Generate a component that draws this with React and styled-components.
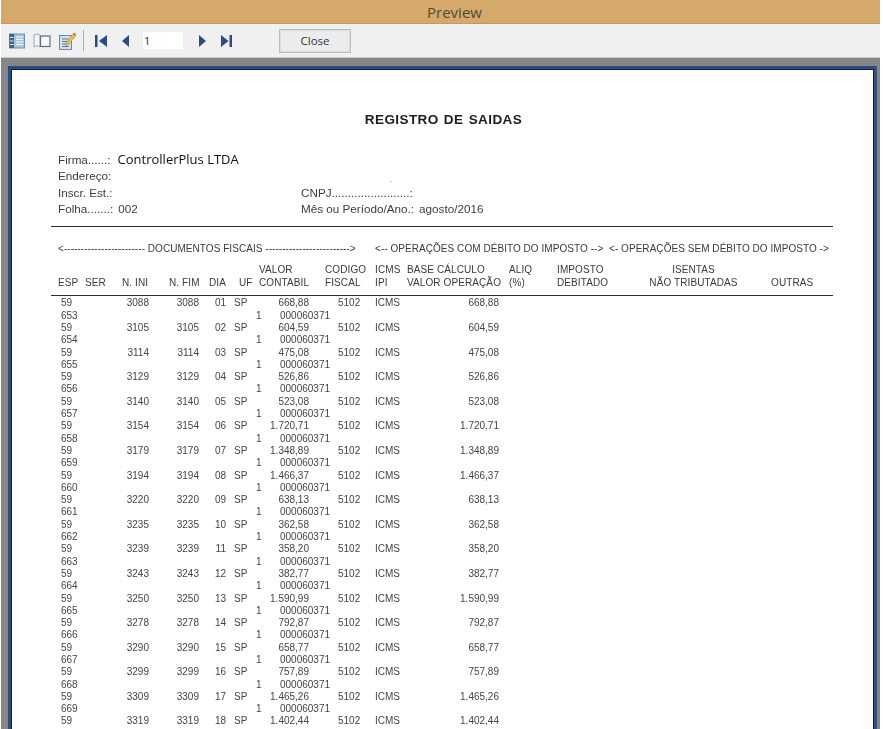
import React from "react";
import styled, { createGlobalStyle } from "styled-components";

const GlobalStyle = createGlobalStyle`
  html, body {
    margin: 0;
    padding: 0;
    background: #fff;
  }
  #root {
    height: 729px;
    overflow: hidden;
  }
`;

const Window = styled.div`
  width: 879px;
  height: 729px;
  margin-left: 1px;
  display: flex;
  flex-direction: column;
  overflow: hidden;
  font-family: "Liberation Sans", Arial, sans-serif;
`;
const TitleBar = styled.div`
  height: 23px;
  flex: none;
  background: #d4a96a;
  border-bottom: 1px solid #c09a60;
  display: flex;
  align-items: center;
  justify-content: center;
  padding-left: 28px;
  font-family: "Open Sans", sans-serif;
  font-size: 15px;
  color: #4f4a3a;
`;
const Toolbar = styled.div`
  height: 33px;
  flex: none;
  background: #f0f0f0;
  border-bottom: 1px solid #c9c9c9;
  display: flex;
  align-items: center;
  padding-left: 8px;
`;
const ToolIcon = styled.svg`
  flex: none;
  display: block;
  margin-left: ${(p) => p.$gap || 0}px;
`;
const Separator = styled.div`
  width: 1px;
  height: 21px;
  margin-left: 7px;
  background: #a9a9a9;
`;
const PageInput = styled.div`
  width: 39px;
  height: 17px;
  margin-left: 14px;
  padding-left: 1px;
  background: #fff;
  font-family: "Open Sans", sans-serif;
  font-size: 11px;
  line-height: 17px;
  color: #2b2b3c;
`;
const CloseButton = styled.button`
  width: 72px;
  height: 24px;
  margin-left: 47px;
  padding: 0;
  background: #ececec;
  border: 1px solid #bdbdbd;
  box-shadow: inset 0 0 0 1px #dcdcdc;
  font-family: "Open Sans", sans-serif;
  font-size: 11.5px;
  color: #333;
`;
const Desk = styled.div`
  flex: 1;
  min-height: 0;
  background: #878787;
  padding: 8px 3px 0 7px;
`;
const Sheet = styled.div`
  height: 100%;
  box-sizing: border-box;
  background: #fff;
  border: 3px solid #2b4a7e;
  border-right-color: #33507f;
  border-bottom: 0;
  box-shadow: inset 1px 1px 0 #10203c, inset -1px 0 0 #10203c;
  padding: 42px 41px 0 40px;
  color: #3a3a3a;
  font-size: 10px;
  overflow: hidden;
`;
const ReportBody = styled.div`
  filter: blur(0.3px);
`;
const ReportTitle = styled.h1`
  margin: 0;
  height: 18px;
  padding-left: 3px;
  font-size: 13.5px;
  line-height: 18px;
  font-weight: bold;
  letter-spacing: 0.42px;
  word-spacing: 1px;
  text-align: center;
  color: #1c1c1c;
`;
const InfoBlock = styled.div`
  margin-top: 22px;
  padding-left: 7px;
  display: grid;
  grid-template-columns: 243px 1fr;
  grid-auto-rows: 16.5px;
  align-items: center;
  font-size: 11.7px;
  color: #3d3d3d;
`;
const Company = styled.span`
  font-family: "Open Sans", sans-serif;
  font-size: 13px;
  color: #111;
  margin-left: 7px;
`;
const Gap = styled.span`
  margin-left: ${(p) => p.$w}px;
`;
const Speck = styled.span`
  align-self: end;
  margin-left: 89px;
  font-size: 8px;
  color: #888;
`;
const Rule = styled.hr`
  margin: ${(p) => p.$top}px 0 0;
  border: 0;
  height: 1px;
  background: #2c2c2c;
`;
const BandRow = styled.div`
  margin-top: 15px;
  height: 14px;
  line-height: 14px;
  padding-left: 7px;
  display: flex;
  font-size: 10px;
  letter-spacing: 0.05px;
  white-space: nowrap;
`;
const Band = styled.span`
  width: ${(p) => p.$w}px;
  flex: none;
`;
const HeadRow = styled.div`
  margin-top: 7px;
  padding-left: 7px;
  display: grid;
  grid-template-columns: 64px 47px 40px 30px 20px 66px 50px 32px 102px 48px 92px 122px 62px;
  grid-auto-rows: 13px;
  align-items: end;
  font-size: 10px;
  line-height: 13px;
  letter-spacing: 0.1px;
  white-space: nowrap;
`;
const HeadCell = styled.div`
  grid-row: ${(p) => p.$row || 2};
  grid-column: ${(p) => p.$col};
  justify-self: start;
`;
const EspSerCell = styled(HeadCell)`
  word-spacing: 4px;
`;
const IsentasCell = styled(HeadCell)`
  width: 89px;
  text-align: center;
`;
const Rows = styled.div`
  margin-top: 1px;
  padding-left: 10px;
  font-size: 10px;
  white-space: nowrap;
  color: #444;
`;
const MainLine = styled.div`
  display: grid;
  grid-template-columns: 49px 39px 50px 27px 36px 47px 66px 32px 92px;
  height: 12.3px;
  line-height: 12.3px;
`;
const SubLine = styled.div`
  display: grid;
  grid-template-columns: 195px 24px auto;
  height: 12.3px;
  line-height: 11.3px;
`;
const Cell = styled.span`
  text-align: ${(p) => (p.$right ? "right" : "left")};
  padding-left: ${(p) => p.$pad || 0}px;
`;

const listIcon = (
  <ToolIcon width="16" height="16" viewBox="0 0 16 16">
    <rect x="0.5" y="1" width="15" height="14" fill="#a8c4de" stroke="#6d8fae" />
    <rect x="0.5" y="1" width="4.5" height="14" fill="#3f648c" />
    <path d="M7 4h7M7 6.5h7M7 9h7M7 11.5h7" stroke="#f4f8fc" strokeWidth="1" />
    <path d="M1 4.5h3.5M1 8h3.5M1 11.5h3.5" stroke="#dbe6f0" strokeWidth="1" />
  </ToolIcon>
);

const bookIcon = (
  <ToolIcon $gap={8} width="18" height="16" viewBox="0 0 18 16">
    <path d="M1 2 C3 1 5 1 7 2 L7 14 C5 12.5 3 12.5 1 14 Z" fill="#f4f6f8" stroke="#98a8b8" />
    <rect x="7.5" y="3" width="9.5" height="10.5" fill="#f8f8f8" stroke="#5a6f88" strokeWidth="1.2" />
  </ToolIcon>
);

const noteIcon = (
  <ToolIcon $gap={8} width="17" height="18" viewBox="0 0 17 18">
    <rect x="0.5" y="3.5" width="12" height="14" fill="#cfe0ee" stroke="#6a8aa8" />
    <path d="M3 7h7M3 9.5h6M3 12h7M3 14.5h7" stroke="#5f7f9e" strokeWidth="1" />
    <path d="M7 11 L14 2 L16.5 4 L9.5 12.5 L6.5 13.5 Z" fill="#e8c34c" stroke="#a88a30" strokeWidth="0.6" />
    <path d="M14 2 L15.2 0.6 L17 2.4 L16.5 4 Z" fill="#d8584c" />
  </ToolIcon>
);

const navColor = "#2b4b88";

const NavIcon = ({ gap, width, children }) => (
  <ToolIcon $gap={gap} width={width} height="12" viewBox={`0 0 ${width} 12`} fill={navColor}>
    {children}
  </ToolIcon>
);

// the last row's second line falls below the window, so it has no serie
const rows = [
  ["653", "3088", "01", "668,88"],
  ["654", "3105", "02", "604,59"],
  ["655", "3114", "03", "475,08"],
  ["656", "3129", "04", "526,86"],
  ["657", "3140", "05", "523,08"],
  ["658", "3154", "06", "1.720,71"],
  ["659", "3179", "07", "1.348,89"],
  ["660", "3194", "08", "1.466,37"],
  ["661", "3220", "09", "638,13"],
  ["662", "3235", "10", "362,58"],
  ["663", "3239", "11", "358,20"],
  ["664", "3243", "12", "382,77"],
  ["665", "3250", "13", "1.590,99"],
  ["666", "3278", "14", "792,87"],
  ["667", "3290", "15", "658,77"],
  ["668", "3299", "16", "757,89"],
  ["669", "3309", "17", "1.465,26"],
  [null, "3319", "18", "1.402,44"],
];

export default function App() {
  return (
    <Window>
      <GlobalStyle />
      <TitleBar>Preview</TitleBar>
      <Toolbar>
        {listIcon}
        {bookIcon}
        {noteIcon}
        <Separator />
        <NavIcon gap={11} width={12}>
          <rect x="0" y="0" width="2.5" height="12" />
          <path d="M12 0 V12 L4 6 Z" />
        </NavIcon>
        <NavIcon gap={15} width={7}>
          <path d="M7 0 V12 L0 6 Z" />
        </NavIcon>
        <PageInput>1</PageInput>
        <NavIcon gap={16} width={7}>
          <path d="M0 0 V12 L7 6 Z" />
        </NavIcon>
        <NavIcon gap={15} width={11}>
          <path d="M0 0 V12 L7.5 6 Z" />
          <rect x="8.5" y="0" width="2.5" height="12" />
        </NavIcon>
        <CloseButton>Close</CloseButton>
      </Toolbar>
      <Desk>
        <Sheet>
          <ReportBody>
            <ReportTitle>REGISTRO DE SAIDAS</ReportTitle>
            <InfoBlock>
              <span>
                Firma......:<Company>ControllerPlus LTDA</Company>
              </span>
              <span />
              <span>Endereço:</span>
              <Speck>.</Speck>
              <span>Inscr. Est.:</span>
              <span>CNPJ........................:</span>
              <span>
                Folha.......:<Gap $w={5}>002</Gap>
              </span>
              <span>
                Mês ou Período/Ano.:<Gap $w={5}>agosto/2016</Gap>
              </span>
            </InfoBlock>
            <Rule $top={9.4} />
            <BandRow>
              <Band $w={317}>{"<------------------------ DOCUMENTOS FISCAIS ------------------------->"}</Band>
              <Band $w={234}>{"<-- OPERAÇÕES COM DÉBITO DO IMPOSTO -->"}</Band>
              <Band $w={222}>{"<- OPERAÇÕES SEM DÉBITO DO IMPOSTO ->"}</Band>
            </BandRow>
            <HeadRow>
              <EspSerCell $col={1}>ESP SER</EspSerCell>
              <HeadCell $col={2}>N. INI</HeadCell>
              <HeadCell $col={3}>N. FIM</HeadCell>
              <HeadCell $col={4}>DIA</HeadCell>
              <HeadCell $col={5}>UF</HeadCell>
              <HeadCell $col={6} $row={1}>VALOR</HeadCell>
              <HeadCell $col={6}>CONTABIL</HeadCell>
              <HeadCell $col={7} $row={1}>CODIGO</HeadCell>
              <HeadCell $col={7}>FISCAL</HeadCell>
              <HeadCell $col={8} $row={1}>ICMS</HeadCell>
              <HeadCell $col={8}>IPI</HeadCell>
              <HeadCell $col={9} $row={1}>BASE CÁLCULO</HeadCell>
              <HeadCell $col={9}>VALOR OPERAÇÃO</HeadCell>
              <HeadCell $col={10} $row={1}>ALIQ</HeadCell>
              <HeadCell $col={10}>(%)</HeadCell>
              <HeadCell $col={11} $row={1}>IMPOSTO</HeadCell>
              <HeadCell $col={11}>DEBITADO</HeadCell>
              <IsentasCell $col={12} $row={1}>ISENTAS</IsentasCell>
              <IsentasCell $col={12}>NÃO TRIBUTADAS</IsentasCell>
              <HeadCell $col={13}>OUTRAS</HeadCell>
            </HeadRow>
            <Rule $top={6} />
            <Rows>
              {rows.map(([serie, doc, day, value]) => (
                <React.Fragment key={doc}>
                  <MainLine>
                    <Cell>59</Cell>
                    <Cell $right>{doc}</Cell>
                    <Cell $right>{doc}</Cell>
                    <Cell $right>{day}</Cell>
                    <Cell $pad={8}>SP</Cell>
                    <Cell $right>{value}</Cell>
                    <Cell $pad={29}>5102</Cell>
                    <Cell>ICMS</Cell>
                    <Cell $right>{value}</Cell>
                  </MainLine>
                  {serie && (
                    <SubLine>
                      <Cell>{serie}</Cell>
                      <Cell>1</Cell>
                      <Cell>000060371</Cell>
                    </SubLine>
                  )}
                </React.Fragment>
              ))}
            </Rows>
          </ReportBody>
        </Sheet>
      </Desk>
    </Window>
  );
}
